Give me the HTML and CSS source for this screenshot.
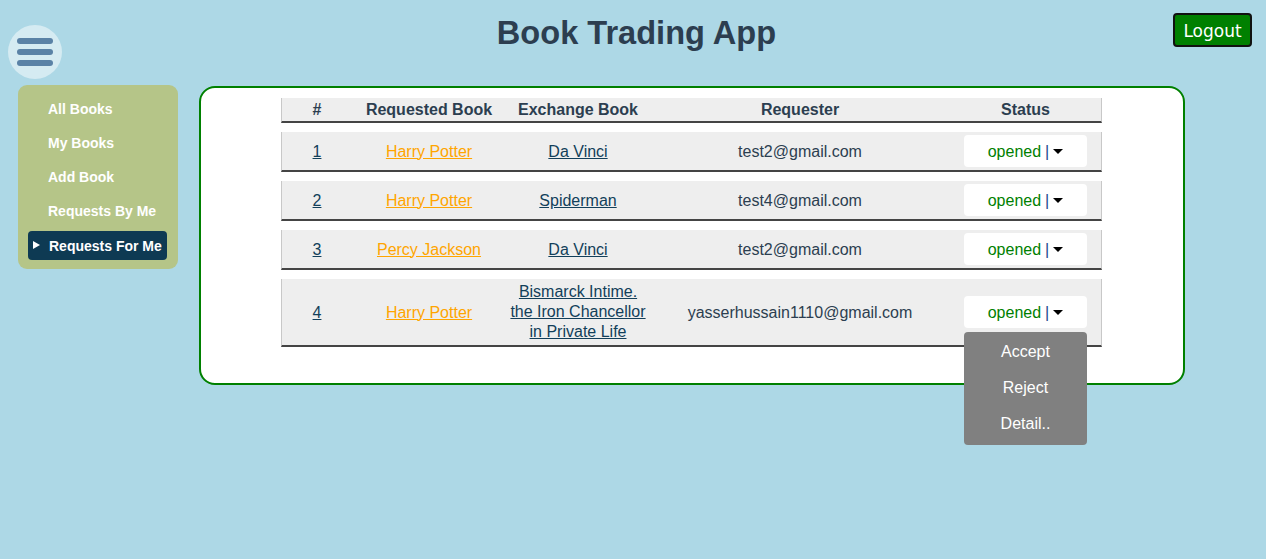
FILE: index.html
```html
<!DOCTYPE html>
<html>
<head>
<meta charset="utf-8">
<title>Book Trading App</title>
<link rel="stylesheet" href="styles.css">
</head>
<body>
<header class="topbar">
  <div class="left">
    <button class="burger" aria-label="menu">
      <span></span><span></span><span></span>
    </button>
  </div>
  <h1 class="title">Book Trading App</h1>
  <div class="right">
    <button class="logout">Logout</button>
  </div>
</header>
<div class="main">
  <nav class="sidebar">
    <a class="nav-item">All Books</a>
    <a class="nav-item">My Books</a>
    <a class="nav-item">Add Book</a>
    <a class="nav-item">Requests By Me</a>
    <a class="nav-item active"><span class="tri"></span>Requests For Me</a>
  </nav>
  <section class="card">
    <div class="table">
      <div class="row head">
        <div class="c">#</div>
        <div class="c">Requested Book</div>
        <div class="c">Exchange Book</div>
        <div class="c">Requester</div>
        <div class="c">Status</div>
      </div>
      <div class="row">
        <div class="c"><a class="lnk">1</a></div>
        <div class="c"><a class="req">Harry Potter</a></div>
        <div class="c"><a class="lnk">Da Vinci</a></div>
        <div class="c">test2@gmail.com</div>
        <div class="c"><div class="status"><span class="op">opened</span><span class="pipe">|</span><span class="caret"></span></div></div>
      </div>
      <div class="row">
        <div class="c"><a class="lnk">2</a></div>
        <div class="c"><a class="req">Harry Potter</a></div>
        <div class="c"><a class="lnk">Spiderman</a></div>
        <div class="c">test4@gmail.com</div>
        <div class="c"><div class="status"><span class="op">opened</span><span class="pipe">|</span><span class="caret"></span></div></div>
      </div>
      <div class="row">
        <div class="c"><a class="lnk">3</a></div>
        <div class="c"><a class="req">Percy Jackson</a></div>
        <div class="c"><a class="lnk">Da Vinci</a></div>
        <div class="c">test2@gmail.com</div>
        <div class="c"><div class="status"><span class="op">opened</span><span class="pipe">|</span><span class="caret"></span></div></div>
      </div>
      <div class="row">
        <div class="c"><a class="lnk">4</a></div>
        <div class="c"><a class="req">Harry Potter</a></div>
        <div class="c multi"><a class="lnk">Bismarck Intime.<br>the Iron Chancellor<br>in Private Life</a></div>
        <div class="c">yasserhussain1110@gmail.com</div>
        <div class="c">
          <div class="status open-menu"><span class="op">opened</span><span class="pipe">|</span><span class="caret"></span>
            <ul class="menu">
              <li>Accept</li>
              <li>Reject</li>
              <li>Detail..</li>
            </ul>
          </div>
        </div>
      </div>
    </div>
  </section>
</div>
</body>
</html>
```

FILE: styles.css
```css
* { box-sizing: border-box; }
html, body { margin: 0; padding: 0; }
body {
  background: #add8e6;
  font-family: "Liberation Sans", Arial, sans-serif;
  font-size: 16px;
  color: #2c3e50;
  width: 1266px;
  height: 559px;
  overflow: hidden;
}
.topbar {
  display: grid;
  grid-template-columns: 1fr auto 1fr;
  height: 85px;
}
.left { padding: 25px 0 0 8px; }
.burger {
  width: 54px;
  height: 54px;
  border-radius: 50%;
  border: none;
  background: #d5ebf2;
  padding: 0;
  display: flex;
  flex-direction: column;
  align-items: center;
  justify-content: center;
  gap: 5px;
}
.burger span {
  display: block;
  width: 36px;
  height: 6px;
  border-radius: 3px;
  background: #5a82a6;
}
.title {
  margin: 14px 0 0 0;
  padding-left: 7px;
  font-size: 32.6px;
  font-weight: bold;
  line-height: 38px;
  color: #2c3e50;
}
.right {
  display: flex;
  justify-content: flex-end;
  padding: 13px 14px 0 0;
  align-items: flex-start;
}
.logout {
  background: #008000;
  color: #fff;
  border: 2px solid #111;
  border-radius: 4px;
  font-family: "DejaVu Sans", sans-serif;
  font-size: 17px;
  height: 34px;
  width: 79px;
  padding: 1px 0 0 0;
}
.main {
  display: flex;
  align-items: flex-start;
}
.sidebar {
  margin-left: 18px;
  width: 160px;
  background: #b5c588;
  border-radius: 9px;
  padding: 9px 11px 9px 10px;
  display: flex;
  flex-direction: column;
  gap: 5px;
}
.nav-item {
  display: flex;
  align-items: center;
  height: 29px;
  padding-left: 20px;
  color: #fff;
  font-weight: bold;
  font-size: 14px;
  border-radius: 4px;
  position: relative;
}
.nav-item.active {
  background: #0e3a53;
  padding-left: 21px;
  margin-top: 1px;
}
.tri {
  position: absolute;
  left: 5px;
  top: 10px;
  width: 0;
  height: 0;
  border-left: 7px solid #fff;
  border-top: 4px solid transparent;
  border-bottom: 4px solid transparent;
}
.card {
  margin-left: 21px;
  margin-top: 1px;
  width: 986px;
  height: 299px;
  background: #fff;
  border: 2px solid #008000;
  border-radius: 16px;
  padding: 10px 0 0 80px;
}
.table {
  width: 821px;
  display: flex;
  flex-direction: column;
  gap: 9px;
}
.row {
  display: grid;
  grid-template-columns: 70px 154px 144px 300px 1fr;
  align-items: center;
  background: #eeeeee;
  border-left: 1px solid #c8c8c8;
  border-right: 1px solid #c8c8c8;
  border-bottom: 2px solid #444;
  padding: 3px 0;
}
.row.head {
  padding: 1px 0 3px 0;
  font-weight: bold;
  height: 25px;
}
.c {
  text-align: center;
  line-height: 21px;
}
.c.multi { line-height: 20px; }
.lnk { color: #123f5a; text-decoration: underline; }
.req { color: #ffa500; text-decoration: underline; }
.status {
  position: relative;
  margin-left: 14px;
  width: 123px;
  height: 32px;
  background: #fff;
  border-radius: 4px;
  display: flex;
  align-items: center;
  justify-content: center;
}
.op { color: #008000; }
.pipe { color: #1a4a8a; margin-left: 4px; }
.caret {
  display: inline-block;
  margin-left: 4px;
  width: 0;
  height: 0;
  border-top: 5px solid #000;
  border-left: 5px solid transparent;
  border-right: 5px solid transparent;
}
.menu {
  position: absolute;
  top: 36px;
  left: 0;
  width: 123px;
  margin: 0;
  padding: 2px 0 3px;
  list-style: none;
  background: #808080;
  border-radius: 4px;
  color: #fff;
  z-index: 2;
}
.menu li {
  height: 36px;
  line-height: 36px;
  text-align: center;
}
```
